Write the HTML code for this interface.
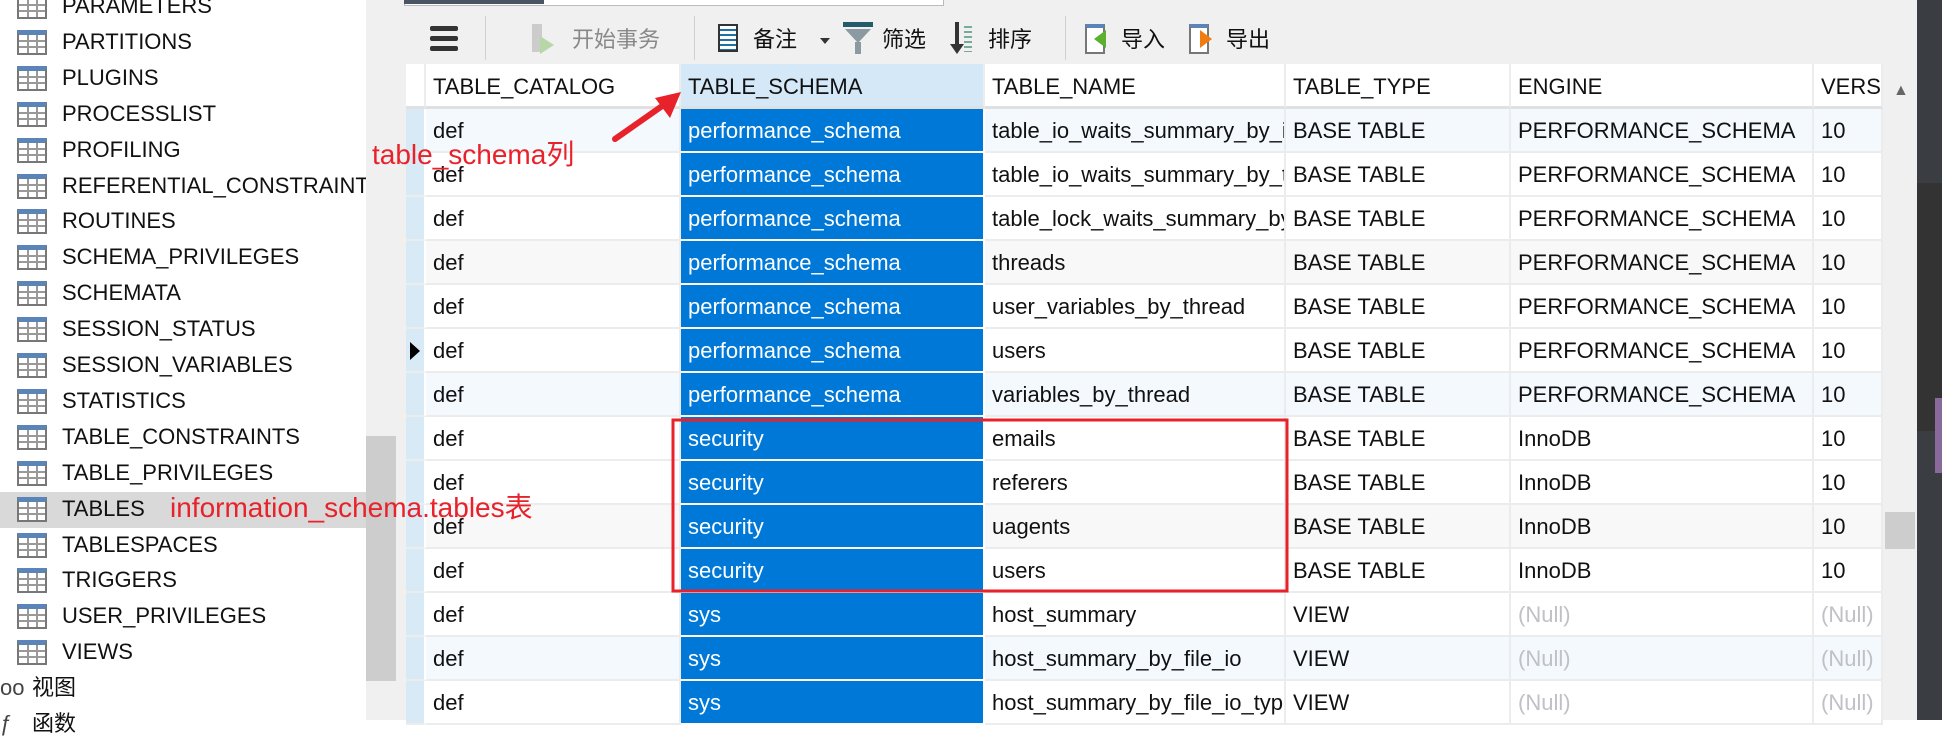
<!DOCTYPE html>
<html><head><meta charset="utf-8"><style>
*{margin:0;padding:0;box-sizing:border-box}
body{width:1942px;height:720px;overflow:hidden;background:#fff;position:relative;font-family:"Liberation Sans","Noto Sans CJK SC",sans-serif;font-size:22px;color:#111}
.a{position:absolute}
.tr{position:absolute;left:0;width:366px;height:36px;line-height:36px;white-space:nowrap;overflow:hidden}
.tr .ic{position:absolute;left:17px;top:6px;width:30px;height:25px;border:2px solid #777;border-top:5px solid #5b84b8;background:
linear-gradient(#999,#999) 0 5px/100% 2px no-repeat,linear-gradient(#999,#999) 0 11px/100% 2px no-repeat,
linear-gradient(#999,#999) 8px 0/2px 100% no-repeat,linear-gradient(#999,#999) 17px 0/2px 100% no-repeat,#fff}
.tr span{position:absolute;left:62px}
.cell{position:absolute;height:44px;line-height:44px;padding-left:7px;white-space:nowrap;overflow:hidden;border-right:2px solid #ececec;border-bottom:2px solid #ececec}
.tb{position:absolute;top:24px;line-height:32px;font-size:22px}
</style></head><body>
<div class="a" style="left:0;top:0;width:366px;height:720px;background:#fff"></div>
<div class="a" style="left:0;top:492px;width:366px;height:36px;background:#d9d9d9"></div>
<div id="tree"></div>
<div class="a" style="left:366px;top:0;width:30px;height:720px;background:#f0f0f0"></div>
<div class="a" style="left:366px;top:436px;width:30px;height:245px;background:#cdcdcd"></div>
<div class="a" style="left:396px;top:0;width:1521px;height:720px;background:#f0f0f0"></div>
<div class="a" style="left:404px;top:0;width:540px;height:6px;background:#fff;border:1px solid #bbb;border-top:0"></div>
<div class="a" style="left:404px;top:0;width:140px;height:4px;background:#4a5563"></div>
<div class="a" style="left:430px;top:26px;width:28px;height:5px;background:#333;border-radius:2px"></div>
<div class="a" style="left:430px;top:36px;width:28px;height:5px;background:#333;border-radius:2px"></div>
<div class="a" style="left:430px;top:46px;width:28px;height:5px;background:#333;border-radius:2px"></div>
<div class="a" style="left:485px;top:16px;width:1px;height:44px;background:#d0d0d0"></div>
<div class="a" style="left:532px;top:24px;width:10px;height:28px;background:#ccc"></div>
<div class="a" style="left:540px;top:36px;width:0;height:0;border-left:14px solid #b8d6a8;border-top:9px solid transparent;border-bottom:9px solid transparent"></div>
<div class="tb" style="left:572px;color:#888">开始事务</div>
<div class="a" style="left:694px;top:16px;width:1px;height:44px;background:#d0d0d0"></div>
<div class="a" style="left:718px;top:24px;width:20px;height:28px;border:2px solid #333;background:repeating-linear-gradient(#fff 0 3px,#1f6fa8 3px 5px)"></div>
<div class="tb" style="left:753px">备注</div>
<div class="a" style="left:820px;top:38px;border-left:5px solid transparent;border-right:5px solid transparent;border-top:6px solid #333"></div>
<div class="a" style="left:843px;top:22px;width:30px;height:5px;background:#245a6a"></div>
<div class="a" style="left:845px;top:29px;width:0;height:0;border-left:13px solid transparent;border-right:13px solid transparent;border-top:14px solid #8a9aa0"></div>
<div class="a" style="left:855px;top:42px;width:6px;height:12px;background:#8a9aa0"></div>
<div class="tb" style="left:882px">筛选</div>
<div class="a" style="left:955px;top:22px;width:4px;height:24px;background:#333"></div>
<div class="a" style="left:950px;top:44px;border-left:7px solid transparent;border-right:7px solid transparent;border-top:10px solid #333"></div>
<div class="a" style="left:964px;top:26px;width:8px;height:26px;background:repeating-linear-gradient(#7a9 0 2px,transparent 2px 5px)"></div>
<div class="tb" style="left:988px">排序</div>
<div class="a" style="left:1065px;top:16px;width:1px;height:44px;background:#d0d0d0"></div>
<div class="a" style="left:1085px;top:24px;width:20px;height:30px;border:2px solid #777;border-top:4px solid #5b84b8;background:#fff"></div>
<div class="a" style="left:1094px;top:30px;border-right:12px solid #5cb030;border-top:9px solid transparent;border-bottom:9px solid transparent"></div>
<div class="tb" style="left:1121px">导入</div>
<div class="a" style="left:1189px;top:24px;width:20px;height:30px;border:2px solid #777;border-top:4px solid #5b84b8;background:#fff"></div>
<div class="a" style="left:1200px;top:30px;border-left:12px solid #f07c10;border-top:9px solid transparent;border-bottom:9px solid transparent"></div>
<div class="tb" style="left:1226px">导出</div>
<div id="grid"></div>
<div class="a" style="left:1883px;top:64px;width:34px;height:656px;background:#f0f0f0"></div>
<div class="a" style="left:1893px;top:82px;font-size:16px;color:#666">&#9650;</div>
<div class="a" style="left:1885px;top:512px;width:30px;height:37px;background:#cdcdcd"></div>
<div class="a" style="left:1917px;top:0;width:25px;height:720px;background:#3a3d42"></div>
<div class="a" style="left:1917px;top:183px;width:25px;height:248px;background:#333"></div>
<div class="a" style="left:1935px;top:398px;width:7px;height:75px;background:#8a6a9a"></div>
<svg class="a" style="left:0;top:0" width="1942" height="720">
<line x1="615" y1="139" x2="665" y2="104" stroke="#e8222a" stroke-width="6" stroke-linecap="round"/>
<polygon points="681,92 655,98 670,118" fill="#e8222a"/>
<rect x="673" y="420" width="614" height="171" fill="none" stroke="#e8222a" stroke-width="3"/>
</svg>
<div class="a" style="left:372px;top:137px;font-size:28px;color:#e8222a;line-height:36px">table_schema列</div>
<div class="a" style="left:170px;top:490px;font-size:28px;color:#e8222a;line-height:36px">information_schema.tables表</div>
<script>
var t=["PARAMETERS","PARTITIONS","PLUGINS","PROCESSLIST","PROFILING","REFERENTIAL_CONSTRAINTS","ROUTINES","SCHEMA_PRIVILEGES","SCHEMATA","SESSION_STATUS","SESSION_VARIABLES","STATISTICS","TABLE_CONSTRAINTS","TABLE_PRIVILEGES","TABLES","TABLESPACES","TRIGGERS","USER_PRIVILEGES","VIEWS"];
var h="";
t.forEach(function(n,i){h+='<div class="tr" style="top:'+(-12+35.9*i)+'px"><div class="ic"></div><span>'+n+'</span></div>';});
h+='<div class="tr" style="top:'+(-12+35.9*19)+'px"><span style="left:0;color:#444">oo</span><span style="left:32px">视图</span></div>';
h+='<div class="tr" style="top:'+(-12+35.9*20)+'px"><span style="left:0;color:#444">ƒ</span><span style="left:32px">函数</span></div>';
document.getElementById("tree").innerHTML=h;
var cols=[[426,255],[681,304],[985,301],[1286,225],[1511,303],[1814,69]];
var hd=["TABLE_CATALOG","TABLE_SCHEMA","TABLE_NAME","TABLE_TYPE","ENGINE","VERS"];
var P="PERFORMANCE_SCHEMA",B="BASE TABLE",N="(Null)";
var rows=[
["performance_schema","table_io_waits_summary_by_index_usage",B,P,"10"],
["performance_schema","table_io_waits_summary_by_table",B,P,"10"],
["performance_schema","table_lock_waits_summary_by_table",B,P,"10"],
["performance_schema","threads",B,P,"10"],
["performance_schema","user_variables_by_thread",B,P,"10"],
["performance_schema","users",B,P,"10"],
["performance_schema","variables_by_thread",B,P,"10"],
["security","emails",B,"InnoDB","10"],
["security","referers",B,"InnoDB","10"],
["security","uagents",B,"InnoDB","10"],
["security","users",B,"InnoDB","10"],
["sys","host_summary","VIEW",N,N],
["sys","host_summary_by_file_io","VIEW",N,N],
["sys","host_summary_by_file_io_type","VIEW",N,N]];
var g='<div class="a" style="left:406px;top:64px;width:1477px;height:656px;background:#fff"></div>';
g+='<div class="a" style="left:406px;top:64px;width:20px;height:45px;background:#fff;border-right:2px solid #ececec;border-bottom:3px solid #e0e0e0"></div>';
hd.forEach(function(x,i){g+='<div class="cell" style="left:'+cols[i][0]+'px;top:64px;width:'+cols[i][1]+'px;height:45px;line-height:45px;border-bottom:3px solid #e0e0e0;background:'+(i==1?'#d5e8f8':'#fff')+'">'+x+'</div>';});
rows.forEach(function(r,k){var y=109+44*k;var bg=(k%6==0)?'#f4f9fe':(k%6==3?'#f8f8f8':'#fff');
g+='<div class="a" style="left:406px;top:'+y+'px;width:20px;height:44px;background:#d9eaf7;border-bottom:2px solid #ececec;border-right:2px solid #fff"></div>';
if(k==5)g+='<div class="a" style="left:410px;top:'+(y+13)+'px;border-left:10px solid #000;border-top:9px solid transparent;border-bottom:9px solid transparent"></div>';
var v=["def"].concat(r);
v.forEach(function(x,i){var st='left:'+cols[i][0]+'px;top:'+y+'px;width:'+cols[i][1]+'px;background:'+bg;
if(i==1)st+=';background:#0078d7;color:#fff;border-right-color:#fff;border-bottom-color:#fff';
if(x==N)st+=';color:#c0c0c8';
g+='<div class="cell" style="'+st+'">'+x+'</div>';});});
document.getElementById("grid").innerHTML=g;
</script>
</body></html>
